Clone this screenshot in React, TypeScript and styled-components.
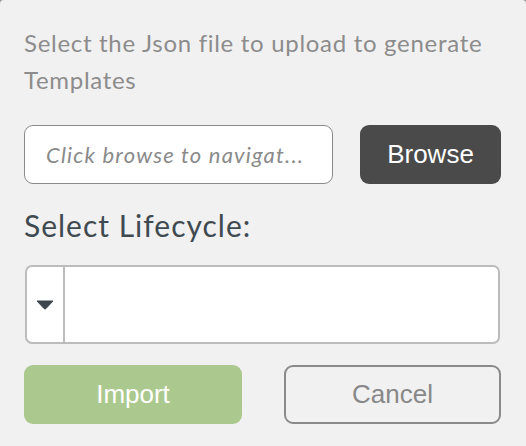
import React from 'react'
import styled, { createGlobalStyle } from 'styled-components'

const GlobalStyle = createGlobalStyle`
  html, body {
    margin: 0;
    padding: 0;
    background: #9a9a9a;
  }
  * { box-sizing: border-box; }
`

const Panel = styled.div`
  width: 526px;
  height: 446px;
  background: #f1f1f1;
  border-radius: 4px 4px 0 0;
  padding: 24px 25px 0 24px;
  display: flex;
  flex-direction: column;
  font-family: Lato, 'Noto Sans', sans-serif;
`

const Intro = styled.p`
  margin: 0;
  font-size: 24px;
  line-height: 37px;
  letter-spacing: 0.7px;
  color: #8c8c8c;
`

const FileRow = styled.div`
  display: flex;
  gap: 27px;
  margin-top: 27px;
  height: 59px;
`

const PathInput = styled.input`
  flex: 1;
  min-width: 0;
  height: 100%;
  border: 1.5px solid #8a8a8a;
  border-radius: 9px;
  background: #fff;
  padding: 0 21px;
  font-family: Lato, 'Noto Sans', sans-serif;
  font-size: 22px;
  font-style: italic;
  letter-spacing: 1.2px;
  outline: none;

  &::placeholder {
    color: #8a8a8a;
    opacity: 1;
  }
`

const Button = styled.button<{ $variant: 'dark' | 'green' | 'outline' }>`
  height: 59px;
  border-radius: 9px;
  font-family: 'Liberation Sans', Arial, sans-serif;
  font-size: 26px;
  cursor: pointer;
  padding: 0;
  border: ${({ $variant }) => ($variant === 'outline' ? '2px solid #8a8a8a' : 'none')};
  background: ${({ $variant }) =>
    $variant === 'dark' ? '#4a4a4a' : $variant === 'green' ? '#abc98f' : 'transparent'};
  color: ${({ $variant }) => ($variant === 'outline' ? '#888' : '#fff')};
`

const BrowseButton = styled(Button)`
  width: 141px;
  flex: none;
`

const Label = styled.div`
  margin-top: 23px;
  font-size: 30px;
  line-height: 36px;
  letter-spacing: 1px;
  color: #3f4950;
`

const Select = styled.div`
  margin-top: 22px;
  height: 79px;
  margin-right: 1px;
  margin-left: 1px;
  display: flex;
  border: 2px solid #bcbcbc;
  border-radius: 7px;
  background: #fff;
  overflow: hidden;
`

const Caret = styled.div`
  width: 38px;
  flex: none;
  display: flex;
  align-items: center;
  justify-content: center;
  border-right: 2px solid #bcbcbc;
`

const Actions = styled.div`
  display: grid;
  grid-template-columns: 218px 217px;
  justify-content: space-between;
  margin-top: 21px;
`

export default function App() {
  return (
    <>
      <GlobalStyle />
      <Panel>
        <Intro>Select the Json file to upload to generate Templates</Intro>
        <FileRow>
          <PathInput placeholder="Click browse to navigat..." readOnly />
          <BrowseButton $variant="dark">Browse</BrowseButton>
        </FileRow>
        <Label>Select Lifecycle:</Label>
        <Select>
          <Caret>
            <svg width="18" height="10" viewBox="0 0 18 10">
              <path d="M1 1 H17 L10 8.5 Q9 9.5 8 8.5 Z" fill="#3d464d" stroke="#3d464d" strokeWidth="1" strokeLinejoin="round" />
            </svg>
          </Caret>
        </Select>
        <Actions>
          <Button $variant="green">Import</Button>
          <Button $variant="outline">Cancel</Button>
        </Actions>
      </Panel>
    </>
  )
}
